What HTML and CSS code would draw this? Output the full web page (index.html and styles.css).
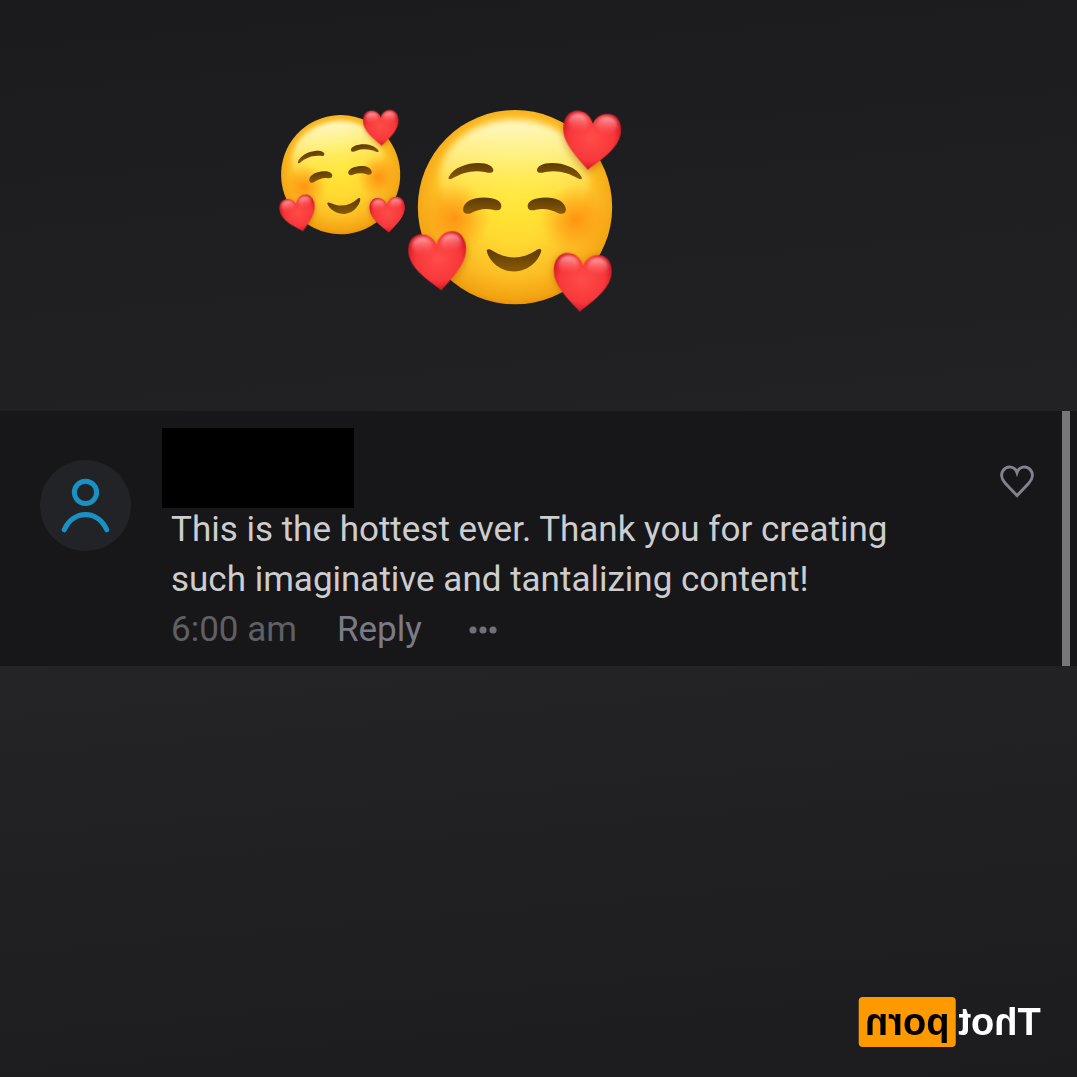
FILE: index.html
```
<!DOCTYPE html>
<html lang="en">
<head>
    <meta charset="UTF-8">
    <meta name="viewport" content="width=device-width, initial-scale=1.0">
    <title>Comment</title>
    <link rel="stylesheet" href="styles.css">
</head>
<body>

    <div class="reactions">
        <svg class="emoji-small" viewBox="55 50 390 390" role="img" aria-label="Smiling face with hearts">
            <use href="#face" transform="translate(243 250) rotate(-8) scale(.612) translate(-345 -353)"/>
        </svg>
        <svg class="emoji-large" viewBox="24 55 645 625" role="img" aria-label="Smiling face with hearts">
            <defs>
                <radialGradient id="skin" cx=".5" cy=".45" r=".57">
                    <stop offset="0" stop-color="#ffe636"/>
                    <stop offset=".4" stop-color="#ffda32"/>
                    <stop offset=".72" stop-color="#fcbd24"/>
                    <stop offset=".92" stop-color="#f3a211"/>
                    <stop offset="1" stop-color="#e08a08"/>
                </radialGradient>
                <linearGradient id="shine" x1="0" y1="0" x2="0" y2="1">
                    <stop offset="0" stop-color="#fffbd0" stop-opacity=".95"/>
                    <stop offset=".3" stop-color="#fff795" stop-opacity=".8"/>
                    <stop offset=".85" stop-color="#ffec38" stop-opacity="0"/>
                </linearGradient>
                <radialGradient id="blush">
                    <stop offset="0" stop-color="#ff8208" stop-opacity=".75"/>
                    <stop offset=".5" stop-color="#ff8f10" stop-opacity=".45"/>
                    <stop offset="1" stop-color="#ff9c18" stop-opacity="0"/>
                </radialGradient>
                <linearGradient id="brown" x1="0" y1="0" x2="0" y2="1">
                    <stop offset="0" stop-color="#5c3b04"/>
                    <stop offset="1" stop-color="#8a5a08"/>
                </linearGradient>
                <radialGradient id="red" cx=".5" cy=".45" r=".6">
                    <stop offset="0" stop-color="#ff4d48"/>
                    <stop offset=".65" stop-color="#f8373a"/>
                    <stop offset="1" stop-color="#c40e20"/>
                </radialGradient>
                <linearGradient id="gloss" x1="0" y1="0" x2="0" y2="1">
                    <stop offset="0" stop-color="#ffb4b8" stop-opacity=".95"/>
                    <stop offset="1" stop-color="#ff5c5c" stop-opacity="0"/>
                </linearGradient>
                <filter id="soft" x="-20%" y="-20%" width="140%" height="140%">
                    <feGaussianBlur stdDeviation="10"/>
                </filter>
                <filter id="softer" x="-20%" y="-20%" width="140%" height="140%">
                    <feGaussianBlur stdDeviation="4"/>
                </filter>
                <clipPath id="round">
                    <circle cx="345" cy="353" r="292"/>
                </clipPath>
                <path id="heart-shape" d="M0-52C-10-78-30-86-46-86C-72-86-87-64-87-36C-87 12-40 50 0 87C40 50 87 12 87-36C87-64 72-86 46-86C30-86 10-78 0-52Z"/>
                <g id="heart">
                    <use href="#heart-shape" fill="url(#red)"/>
                    <ellipse cx="-44" cy="-52" rx="31" ry="27" fill="url(#gloss)" filter="url(#softer)"/>
                    <ellipse cx="44" cy="-52" rx="31" ry="27" fill="url(#gloss)" filter="url(#softer)"/>
                </g>
                <g id="face">
                    <circle cx="345" cy="353" r="292" fill="url(#skin)"/>
                    <ellipse cx="343" cy="270" rx="226" ry="180" fill="url(#shine)" filter="url(#soft)"/>
                    <circle cx="165" cy="385" r="105" fill="url(#blush)"/>
                    <circle cx="525" cy="390" r="105" fill="url(#blush)"/>
                    <g fill="url(#brown)">
                        <path d="M146 262C160 232 206 219 236 220C262 220 281 230 280 243C278 253 266 250 254 247C218 240 184 250 156 267C148 271 143 268 146 262Z"/>
                        <path d="M545 262C531 232 485 219 455 220C429 220 410 230 411 243C413 253 425 250 437 247C473 240 507 250 535 267C543 271 548 268 545 262Z"/>
                        <path d="M189 360C190 337 218 324 252 324C286 324 305 336 304 350C303 364 290 364 279 361C255 355 230 361 212 371C200 376 189 372 189 360Z"/>
                        <path d="M498 360C497 337 469 324 438 324C402 324 383 336 383 350C384 364 397 364 408 361C432 355 457 361 475 371C487 376 498 372 498 360Z"/>
                        <path d="M260 483C263 477 270 479 276 483C320 511 365 511 408 483C414 479 422 476 424 483C421 505 392 545 343 546C293 546 263 506 260 483Z"/>
                    </g>
                    <g fill="#a85200" opacity=".4" clip-path="url(#round)">
                        <use href="#heart-shape" transform="translate(572 168) rotate(6)" filter="url(#soft)"/>
                        <use href="#heart-shape" transform="translate(119 524) rotate(-6)" filter="url(#soft)"/>
                        <use href="#heart-shape" transform="translate(543 582) rotate(4)" filter="url(#soft)"/>
                    </g>
                    <use href="#heart" transform="translate(573 154) rotate(6)"/>
                    <use href="#heart" transform="translate(115 516) rotate(-6)"/>
                    <use href="#heart" transform="translate(546 580) rotate(4)"/>
                </g>
            </defs>
            <use href="#face"/>
        </svg>
    </div>

    <div class="comment">
        <div class="avatar">
            <svg viewBox="0 0 90 90" aria-hidden="true">
                <circle cx="45" cy="32" r="11"/>
                <path d="M24 69C33 49 57 49 66 69"/>
            </svg>
        </div>
        <div class="comment-body">
            <div class="hidden-name"></div>
            <p class="comment-text">This is the hottest ever. Thank you for creating such imaginative and tantalizing content!</p>
            <div class="comment-actions">
                <span class="time">6:00 am</span>
                <button type="button" class="reply">Reply</button>
                <button type="button" class="more" aria-label="More options">
                    <svg viewBox="0 0 28 8" aria-hidden="true">
                        <circle cx="4" cy="4" r="3.6"/>
                        <circle cx="14" cy="4" r="3.6"/>
                        <circle cx="24" cy="4" r="3.6"/>
                    </svg>
                </button>
            </div>
        </div>
        <button type="button" class="like" aria-label="Like">
            <svg viewBox="0 0 36 36" aria-hidden="true">
                <path d="M18 32.500L6.500 20.500C1.500 15 2 10 4.500 7C8.500 2 16 3.500 18 9.500C20 3.500 27.500 2 31.500 7C34 10 34.500 15 29.500 20.500Z"/>
            </svg>
        </button>
        <div class="scrollbar"></div>
    </div>

    <div class="footer">
        <div class="logo">
            <span class="logo-first">Thot</span>
            <span class="logo-second">porn</span>
        </div>
    </div>

</body>
</html>
```
FILE: styles.css
```
* {
    box-sizing: border-box;
}

body {
    margin: 0;
    min-height: 100vh;
    display: grid;
    grid-template-rows: 1fr auto 1fr;
    background-color: #1c1c1e;
    color: #cdcdcf;
    font-family: Roboto, "Liberation Sans", sans-serif;
    font-size: 35px;
    line-height: 50px;
}

svg {
    display: block;
}

button {
    border: 0;
    padding: 0;
    background: none;
    color: inherit;
    font: inherit;
    cursor: pointer;
}

/* Emoji area */
.reactions {
    display: flex;
    align-items: flex-start;
    padding: 108px 20px 0 278px;
    background: linear-gradient(175deg, #1b1b1d, #222224);
}

.emoji-small {
    width: 130px;
    height: 130px;
    overflow: visible;
}

.emoji-large {
    width: 215px;
    height: 208px;
    overflow: visible;
}

/* Comment row */
.comment {
    display: flex;
    align-items: flex-start;
    padding: 17px 7px 11px 40px;
    position: relative;
    background-color: #171719;
}

.avatar {
    flex: none;
    width: 91px;
    height: 91px;
    margin-top: 32px;
    border-radius: 50%;
    background-color: #222326;
}

.avatar svg {
    fill: none;
    stroke: #1991c4;
    stroke-width: 5;
    stroke-linecap: round;
}

.comment-body {
    flex: 1;
    margin-left: 40px;
}

/* Blacked out user name */
.hidden-name {
    width: 192px;
    height: 80px;
    margin: 0 0 -3px -9px;
    background-color: #000000;
}

.comment-text {
    max-width: 750px;
    margin: 0;
}

.comment-actions {
    display: flex;
    align-items: center;
    color: #7b7b88;
}

.time {
    color: #5f5f66;
}

.reply {
    margin-left: 40px;
}

.more {
    margin-left: 47px;
}

.more svg {
    width: 28px;
    height: 8px;
    fill: #70707a;
}

.like {
    margin: 35px 35px 0 20px;
}

.like svg {
    width: 36px;
    height: 36px;
    fill: none;
    stroke: #82828e;
    stroke-width: 3;
}

.scrollbar {
    position: absolute;
    top: 0;
    bottom: 0;
    right: 7px;
    width: 8px;
    background-color: #777778;
}

/* Footer with the mirrored logo */
.footer {
    display: flex;
    align-items: flex-end;
    justify-content: flex-end;
    padding: 0 36px 30px;
    background: linear-gradient(175deg, #242426, #1c1c1e);
}

.logo {
    display: flex;
    gap: 3px;
    transform: scaleX(-1);
    font-family: "Liberation Sans", Arial, sans-serif;
    font-size: 38px;
    font-weight: bold;
}

.logo-first {
    color: #ffffff;
}

.logo-second {
    padding: 0 6px;
    border-radius: 4px;
    background-color: #ff9900;
    color: #000000;
}
```
